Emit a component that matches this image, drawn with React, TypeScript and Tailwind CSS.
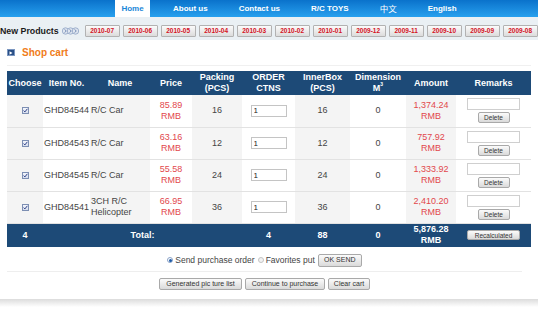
import React from "react";

const rows = [
  { id: "GHD84544", name: "R/C Car", price: "85.89", pack: 16, inner: 16, amount: "1,374.24" },
  { id: "GHD84543", name: "R/C Car", price: "63.16", pack: 12, inner: 12, amount: "757.92" },
  { id: "GHD84545", name: "R/C Car", price: "55.58", pack: 24, inner: 24, amount: "1,333.92" },
  { id: "GHD84541", name: "3CH R/C Helicopter", price: "66.95", pack: 36, inner: 36, amount: "2,410.20" },
];

const dates = [
  "2010-07", "2010-06", "2010-05", "2010-04", "2010-03", "2010-02",
  "2010-01", "2009-12", "2009-11", "2009-10", "2009-09", "2009-08",
];

function Check() {
  return (
    <span className="inline-flex w-[7px] h-[7px] border border-[#7d8fb3] bg-gradient-to-b from-[#f4f6fb] to-[#d6ddec] items-center justify-center">
      <svg width="5" height="5" viewBox="0 0 5 5">
        <path d="M0.6 2.6 L1.9 3.9 L4.4 0.8" stroke="#2d3f86" strokeWidth="1" fill="none" />
      </svg>
    </span>
  );
}

function GreyBtn({ children, className }: { children: React.ReactNode; className: string }) {
  return (
    <span
      className={
        "inline-flex items-center justify-center border border-[#a9a9a9] rounded-[2px] bg-gradient-to-b from-[#fbfbfb] to-[#dadada] text-[#333] " +
        className
      }
    >
      {children}
    </span>
  );
}

export default function App() {
  return (
    <div className="w-[538px] h-[311px] bg-white overflow-hidden font-['Liberation_Sans',Arial,sans-serif]">
      {/* Nav bar */}
      <div className="h-[17px] bg-gradient-to-b from-[#0a72cb] to-[#27a0ee] flex items-stretch text-[8px] font-bold text-white">
        <div className="ml-[115px] w-[35px] bg-white text-[#1b87d8] flex items-center justify-center">Home</div>
        <div className="ml-[23px] flex items-center gap-[31px]">
          <span>About us</span>
          <span>Contact us</span>
          <span>R/C TOYS</span>
          <span className="font-['Noto_Sans_CJK_SC',sans-serif] font-normal text-[8.5px]">中文</span>
          <span>English</span>
        </div>
      </div>

      {/* New products row */}
      <div className="h-[23px] bg-[#eaf0f4] flex items-center pt-[5px]">
        <span className="text-[8.8px] font-bold text-[#1a1a1a] leading-none">New Products</span>
        <svg className="ml-[3px]" width="17" height="8" viewBox="0 0 17 8">
          {[3.5, 8.5, 13.5].map((cx) => (
            <g key={cx}>
              <circle cx={cx} cy="4" r="3.2" fill="#dfe6f0" stroke="#8ea2c4" strokeWidth="0.8" />
              <path d={`M${cx - 1} 2.4 L${cx + 0.8} 4 L${cx - 1} 5.6`} stroke="#6c84b0" strokeWidth="0.9" fill="none" />
            </g>
          ))}
        </svg>
        <div className="ml-[6px] flex gap-[3px]">
          {dates.map((d) => (
            <span
              key={d}
              className="w-[35px] h-[12px] flex items-center justify-center border border-[#b2b2b2] rounded-[1px] bg-gradient-to-b from-[#fbfbfb] to-[#dcdcdc] text-[6.5px] font-bold text-[#d4121f]"
            >
              {d}
            </span>
          ))}
        </div>
      </div>

      {/* Shop cart title */}
      <div className="h-[26px] mx-[7px] flex items-center border-b border-[#f0f0f0]">
        <span className="w-[8px] h-[7px] bg-[#294f86] border border-[#7a96c0] flex items-center justify-center">
          <svg width="4" height="4" viewBox="0 0 4 4">
            <path d="M0.5 0.3 L3.5 2 L0.5 3.7 Z" fill="#fff" />
          </svg>
        </span>
        <span className="ml-[7px] text-[10px] font-bold text-[#f07c1a]">Shop cart</span>
      </div>

      {/* Table */}
      <table className="mt-[5px] ml-[7px] w-[524px] table-fixed border-collapse text-[9px] text-[#444]">
        <colgroup>
          <col className="w-[36px]" />
          <col className="w-[47px]" />
          <col className="w-[60px]" />
          <col className="w-[42px]" />
          <col className="w-[50px]" />
          <col className="w-[53px]" />
          <col className="w-[55px]" />
          <col className="w-[56px]" />
          <col className="w-[50px]" />
          <col className="w-[75px]" />
        </colgroup>
        <thead>
          <tr className="h-[24px] bg-[#1d4a77] text-white font-bold leading-[11px]">
            <th className="p-0 font-bold">Choose</th>
            <th className="p-0 font-bold">Item No.</th>
            <th className="p-0 font-bold">Name</th>
            <th className="p-0 font-bold">Price</th>
            <th className="p-0 font-bold">Packing<br />(PCS)</th>
            <th className="p-0 font-bold">ORDER<br />CTNS</th>
            <th className="p-0 font-bold">InnerBox<br />(PCS)</th>
            <th className="p-0 font-bold">Dimension<br />M<sup className="text-[5px] align-top relative top-[1px]">3</sup></th>
            <th className="p-0 font-bold">Amount</th>
            <th className="p-0 font-bold">Remarks</th>
          </tr>
        </thead>
        <tbody>
          {rows.map((r) => (
            <tr key={r.id} className="h-[32px] border-b border-[#e2e2e2] leading-[11px]">
              <td className="p-0 bg-[#f4f4f4] text-center align-middle">
                <span className="inline-flex mt-[2px]"><Check /></span>
              </td>
              <td className="p-0 pl-[1px] text-left">{r.id}</td>
              <td className="p-0 pl-[1px] bg-[#f4f4f4] text-left">{r.name}</td>
              <td className="p-0 text-center text-[#e2474c]">
                {r.price}
                <br />RMB
              </td>
              <td className="p-0 bg-[#f4f4f4] text-center">{r.pack}</td>
              <td className="p-0 text-center">
                <input
                  readOnly
                  defaultValue="1"
                  className="w-[36px] h-[12px] border border-[#c4c4c4] text-[8px] px-[2px] text-[#222] outline-none align-middle"
                />
              </td>
              <td className="p-0 bg-[#f4f4f4] text-center">{r.inner}</td>
              <td className="p-0 text-center">0</td>
              <td className="p-0 bg-[#f4f4f4] text-center text-[#e2474c]">
                {r.amount}
                <br />RMB
              </td>
              <td className="p-0">
                <div className="flex flex-col items-center gap-[2px]">
                  <input readOnly className="w-[53px] h-[12px] border border-[#cfcfcf] outline-none" />
                  <GreyBtn className="w-[32px] h-[11px] text-[6.5px]">Delete</GreyBtn>
                </div>
              </td>
            </tr>
          ))}
        </tbody>
        <tfoot>
          <tr className="h-[24px] bg-[#1d4a77] text-white font-bold leading-[11px]">
            <td className="p-0 text-center">4</td>
            <td className="p-0 text-center" colSpan={4}>Total:</td>
            <td className="p-0 text-center">4</td>
            <td className="p-0 text-center">88</td>
            <td className="p-0 text-center">0</td>
            <td className="p-0 text-center">
              5,876.28
              <br />RMB
            </td>
            <td className="p-0 text-center">
              <GreyBtn className="w-[53px] h-[10px] text-[6.5px] font-normal">Recalculated</GreyBtn>
            </td>
          </tr>
        </tfoot>
      </table>

      {/* Send row */}
      <div className="ml-[7px] w-[515px] mt-[6px] h-[14px] flex items-center justify-center text-[8.5px] text-[#444]">
        <span className="w-[6px] h-[6px] rounded-full border border-[#8aa2c8] bg-white flex items-center justify-center">
          <span className="w-[3px] h-[3px] rounded-full bg-[#1d5aa6]" />
        </span>
        <span className="ml-[2px]">Send purchase order</span>
        <span className="ml-[3px] w-[6px] h-[6px] rounded-full border border-[#c4c4c4] bg-[#f2f2f2]" />
        <span className="ml-[2px]">Favorites put</span>
        <GreyBtn className="ml-[3px] w-[44px] h-[13px] text-[7px]">OK SEND</GreyBtn>
      </div>

      <div className="ml-[7px] w-[515px] mt-[4px] border-t border-[#eeeeee]" />

      <div className="ml-[7px] w-[515px] mt-[6px] flex justify-center gap-[3px]">
        <GreyBtn className="w-[83px] h-[12px] text-[7px]">Generated pic ture list</GreyBtn>
        <GreyBtn className="w-[80px] h-[12px] text-[7px]">Continue to purchase</GreyBtn>
        <GreyBtn className="w-[42px] h-[12px] text-[7px]">Clear cart</GreyBtn>
      </div>

      <div className="mt-[9px] h-[8px] bg-gradient-to-b from-[#dcdcdc] to-white" />
    </div>
  );
}
